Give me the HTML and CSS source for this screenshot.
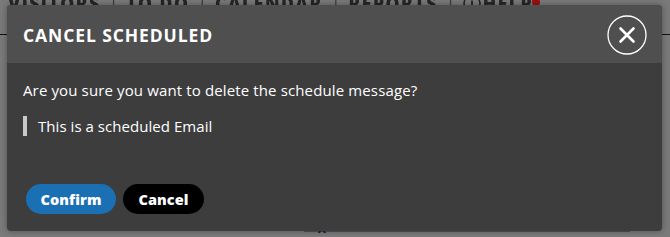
FILE: index.html
```html
<!DOCTYPE html>
<html>
<head>
<meta charset="utf-8">
<link rel="stylesheet" href="styles.css">
</head>
<body>
<div class="page">
  <nav class="nav">
    <span class="item">VISITORS</span><span class="sep">|</span><span class="item">TO DO</span><span class="sep">|</span><span class="item">CALENDAR</span><span class="sep">|</span><span class="item">REPORTS</span><span class="sep">|</span><span class="item help">&#9432;HELP<i class="dot"></i></span>
  </nav>
  <div class="rule-l"></div>
  <div class="rule-r"></div>
  <div class="strip"><span class="strip-x">X</span></div>
</div>
<div class="overlay">
  <div class="modal">
    <div class="modal-head">
      <h2 class="title">CANCEL SCHEDULED</h2>
      <button class="close" aria-label="Close">
        <svg width="40" height="40" viewBox="0 0 40 40">
          <circle cx="20" cy="20" r="19" fill="none" stroke="#fff" stroke-width="1.3"/>
          <path d="M13.5 13.5 L26.5 26.5 M26.5 13.5 L13.5 26.5" stroke="#fff" stroke-width="2.6" stroke-linecap="round"/>
        </svg>
      </button>
    </div>
    <div class="modal-body">
      <p class="question">Are you sure you want to delete the schedule message?</p>
      <blockquote class="quote">This is a scheduled Email</blockquote>
      <div class="actions">
        <button class="btn btn-confirm">Confirm</button>
        <button class="btn btn-cancel">Cancel</button>
      </div>
    </div>
  </div>
</div>
</body>
</html>
```
FILE: styles.css
```css
* { box-sizing: border-box; }
html, body { margin: 0; padding: 0; }
body {
  width: 670px;
  height: 237px;
  overflow: hidden;
  position: relative;
  background: #7a7a7a;
  font-family: "Open Sans", "Liberation Sans", sans-serif;
}
.page { position: relative; width: 670px; height: 237px; }
.nav {
  display: flex;
  align-items: baseline;
  gap: 8px;
  padding-left: 8px;
  margin-top: -9px;
  font: 800 17.5px "Open Sans", sans-serif;
  letter-spacing: 1.5px;
  color: #262626;
  white-space: nowrap;
  filter: blur(0.5px);
}
.nav .sep { font-weight: 400; color: #3a3a3a; letter-spacing: 0; }
.help { position: relative; }
.dot {
  position: absolute;
  right: -7px;
  top: 7px;
  width: 8px;
  height: 8px;
  border-radius: 50%;
  background: #9a1010;
}
.rule-l, .rule-r {
  position: absolute;
  top: 43px;
  height: 1px;
  background: #111;
}
.rule-l { left: 0; width: 8px; }
.rule-r { left: 660px; width: 10px; }
.strip {
  position: absolute;
  left: 304px;
  top: 231px;
  width: 326px;
  height: 10px;
  background: #4b555e;
}
.strip-x {
  position: absolute;
  left: 14px;
  top: 2px;
  font: 700 12px "Open Sans", sans-serif;
  color: #1c1c1c;
  line-height: 10px;
}
.overlay {
  position: absolute;
  inset: 0;
  padding: 5px 8px 0 7px;
}
.modal {
  width: 655px;
  height: 226px;
  border-radius: 4px;
  overflow: hidden;
  background: #3d3d3d;
  box-shadow: 0 0 6px rgba(0,0,0,0.35);
  display: flex;
  flex-direction: column;
}
.modal-head {
  height: 58px;
  background: #4f4f4f;
  display: flex;
  align-items: center;
  justify-content: space-between;
  padding: 1px 15px 0 16px;
}
.title {
  margin: 0;
  color: #fff;
  font: 700 17.5px "Open Sans", sans-serif;
  letter-spacing: 0.9px;
}
.close {
  width: 40px;
  height: 40px;
  padding: 0;
  border: 0;
  background: none;
  display: block;
}
.close svg { display: block; }
.modal-body {
  padding: 16px 16px 0 16px;
  color: #fff;
}
.question {
  margin: 0;
  font-size: 15px;
  line-height: 22px;
  letter-spacing: 0.13px;
}
.quote {
  margin: 15px 0 0 0;
  border-left: 4px solid #c9c9c9;
  padding-left: 11px;
  font-size: 15px;
  line-height: 20px;
  letter-spacing: 0.05px;
}
.actions {
  display: flex;
  gap: 7px;
  margin-top: 48px;
  padding-left: 3px;
}
.btn {
  height: 30px;
  border: 0;
  border-radius: 15px;
  color: #fff;
  font: 800 14.5px "Open Sans", sans-serif;
  padding: 0;
  letter-spacing: 0.1px;
}
.btn-confirm { width: 90px; background: #1b6fb3; }
.btn-cancel { width: 81px; background: #000; }
```
